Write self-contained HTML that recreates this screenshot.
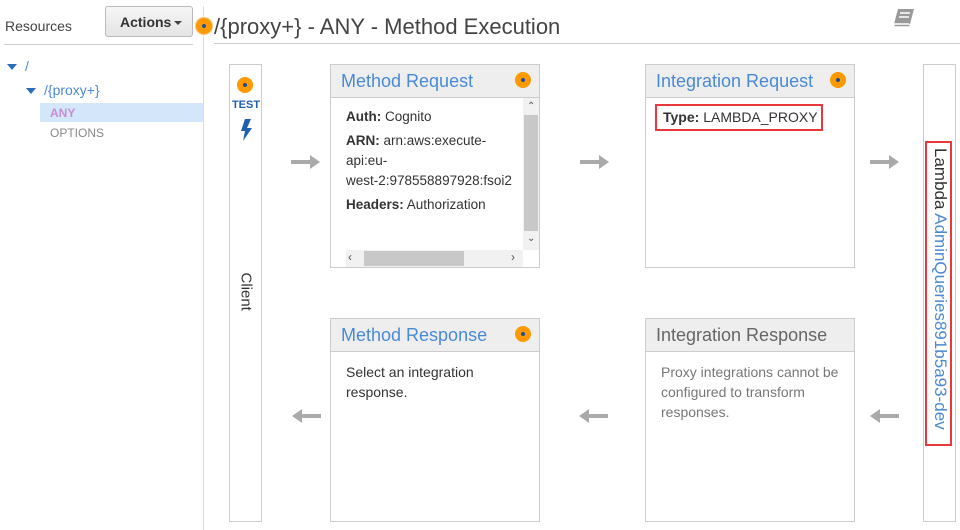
<!DOCTYPE html>
<html><head><style>
*{margin:0;padding:0;box-sizing:border-box}
body{width:960px;height:530px;background:#fff;font-family:"Liberation Sans",Arial,sans-serif;position:relative;overflow:hidden;color:#333}
.a{position:absolute}
.box{position:absolute;border:1px solid #ccc;background:#fff}
.hd{height:33px;background:#eee;border-bottom:1px solid #ccc;font-size:18px;color:#4a8ad4;padding:6px 0 0 10px;position:relative}
.dot{position:absolute;width:16px;height:16px;border-radius:50%;background:#f90;}
.dot:after{content:"";position:absolute;left:6px;top:6px;width:4px;height:4px;border-radius:50%;background:#1f4d9e}
.bd{font-size:14px;padding:12px 15px;line-height:20px}
.arr{position:absolute;height:4px;width:20px;background:#aaa}
.arr.r:after{content:"";position:absolute;right:-9px;top:-5px;border-left:10px solid #aaa;border-top:7px solid transparent;border-bottom:7px solid transparent}
.arr.l:before{content:"";position:absolute;left:-9px;top:-5px;border-right:10px solid #aaa;border-top:7px solid transparent;border-bottom:7px solid transparent}
</style></head><body>
<div class="a" style="left:5px;top:18px;font-size:14px;color:#444">Resources</div>
<div class="a" style="left:105px;top:6px;width:88px;height:31px;border:1px solid #bbb;border-radius:3px;background:linear-gradient(#f6f6f6,#e4e4e4);font-size:14px;font-weight:bold;color:#333;padding:7px 0 0 14px">Actions<span style="display:inline-block;margin-left:3px;border-top:4px solid #444;border-left:4px solid transparent;border-right:4px solid transparent;vertical-align:middle"></span></div>
<div class="a" style="left:4px;top:44px;width:189px;height:1px;background:#ccc"></div>
<div class="a" style="left:203px;top:6px;width:1px;height:524px;background:#ddd"></div>
<div class="a" style="left:7px;top:64px;border-top:6px solid #2a6ebb;border-left:5px solid transparent;border-right:5px solid transparent"></div>
<div class="a" style="left:25px;top:58px;font-size:14px;color:#4a8ad4">/</div>
<div class="a" style="left:26px;top:88px;border-top:6px solid #2a6ebb;border-left:5px solid transparent;border-right:5px solid transparent"></div>
<div class="a" style="left:44px;top:82px;font-size:14px;color:#4a8ad4">/{proxy+}</div>
<div class="a" style="left:40px;top:103px;width:163px;height:19px;background:#d4e6f9"></div>
<div class="a" style="left:50px;top:106px;font-size:12px;font-weight:bold;color:#c78ed6">ANY</div>
<div class="a" style="left:50px;top:126px;font-size:12px;color:#888">OPTIONS</div>
<div class="dot" style="left:196px;top:18px;box-shadow:0 0 0 1px #fbc67a"></div>
<div class="a" style="left:214px;top:14px;font-size:22px;color:#444">/{proxy+} - ANY - Method Execution</div>
<div class="a" style="left:214px;top:43px;width:746px;height:1px;background:#ccc"></div>
<svg class="a" style="left:892px;top:8px" width="24" height="20" viewBox="0 0 24 20"><path d="M6 1h16l-4 15H2z" fill="#999"/><path d="M2 16h15" stroke="#fff" stroke-width="1.5"/><path d="M2.5 17.5h15" stroke="#999" stroke-width="1.5"/><path d="M8 5h10M7 9h10" stroke="#fff" stroke-width="1.4"/></svg>

<div class="box" style="left:229px;top:64px;width:33px;height:458px"></div>
<div class="dot" style="left:237px;top:77px"></div>
<div class="a" style="left:231px;top:99px;font-size:11px;font-weight:bold;color:#1f5fb0;width:30px;text-align:center">TEST</div>
<svg class="a" style="left:239px;top:118px" width="14" height="24" viewBox="0 0 14 24"><path d="M6 1h6L8 10h5L4 23l2-10H2z" fill="#1f5fb0"/></svg>
<div class="a" style="left:236px;top:284px;font-size:15px;color:#333;transform:rotate(90deg);transform-origin:center;width:40px;margin-left:-10px">Client</div>

<div class="box" style="left:330px;top:64px;width:210px;height:204px">
<div class="hd">Method Request<div class="dot" style="right:8px;top:7px"></div></div>
<div class="bd" style="padding-top:9px;width:193px;overflow:hidden;white-space:nowrap;font-size:13.5px">
<div style="margin-bottom:4px"><b>Auth:</b> Cognito</div>
<div style="margin-bottom:4px"><b>ARN:</b> arn:aws:execute-<br>api:eu-<br>west-2:978558897928:fsoi2</div>
<div><b>Headers:</b> Authorization</div></div>
<div class="a" style="left:192px;top:33px;width:16px;height:152px;background:#f1f1f1"></div>
<div class="a" style="left:193px;top:50px;width:14px;height:116px;background:#c8c8c8"></div>
<div class="a" style="left:196px;top:36px;font-size:10px;color:#555">&#8963;</div>
<div class="a" style="left:196px;top:168px;font-size:10px;color:#555">&#8964;</div>
<div class="a" style="left:15px;top:185px;width:177px;height:17px;background:#f1f1f1"></div>
<div class="a" style="left:33px;top:186px;width:100px;height:15px;background:#c8c8c8"></div>
<div class="a" style="left:17px;top:185px;font-size:12px;color:#555">&lsaquo;</div>
<div class="a" style="left:180px;top:185px;font-size:12px;color:#555">&rsaquo;</div>
</div>

<div class="box" style="left:645px;top:64px;width:210px;height:204px">
<div class="hd">Integration Request<div class="dot" style="right:8px;top:7px"></div></div>
</div>
<div class="a" style="left:655px;top:104px;width:168px;height:27px;border:2px solid #e8383d;font-size:14px;padding:3px 0 0 6px;white-space:nowrap"><b>Type:</b> LAMBDA_PROXY</div>

<div class="box" style="left:330px;top:318px;width:210px;height:204px">
<div class="hd">Method Response<div class="dot" style="right:8px;top:7px"></div></div>
<div class="bd" style="padding-top:10px">Select an integration response.</div>
</div>
<div class="box" style="left:645px;top:318px;width:210px;height:204px">
<div class="hd" style="color:#666">Integration Response</div>
<div class="bd" style="padding-top:10px;color:#777">Proxy integrations cannot be configured to transform responses.</div>
</div>

<div class="box" style="left:923px;top:64px;width:33px;height:458px"></div>
<div class="a" style="left:925px;top:141px;width:27px;height:305px;border:2px solid #e8383d"></div>
<div class="a" style="left:780px;top:284px;width:320px;height:20px;transform:rotate(90deg);font-size:17px;white-space:nowrap;color:#333;padding-left:14px">Lambda <span style="color:#4a8ad4">AdminQueries891b5a93-dev</span></div>

<div class="arr r" style="left:291px;top:160px"></div>
<div class="arr r" style="left:580px;top:160px"></div>
<div class="arr r" style="left:870px;top:160px"></div>
<div class="arr l" style="left:301px;top:414px"></div>
<div class="arr l" style="left:588px;top:414px"></div>
<div class="arr l" style="left:879px;top:414px"></div>
</body></html>
